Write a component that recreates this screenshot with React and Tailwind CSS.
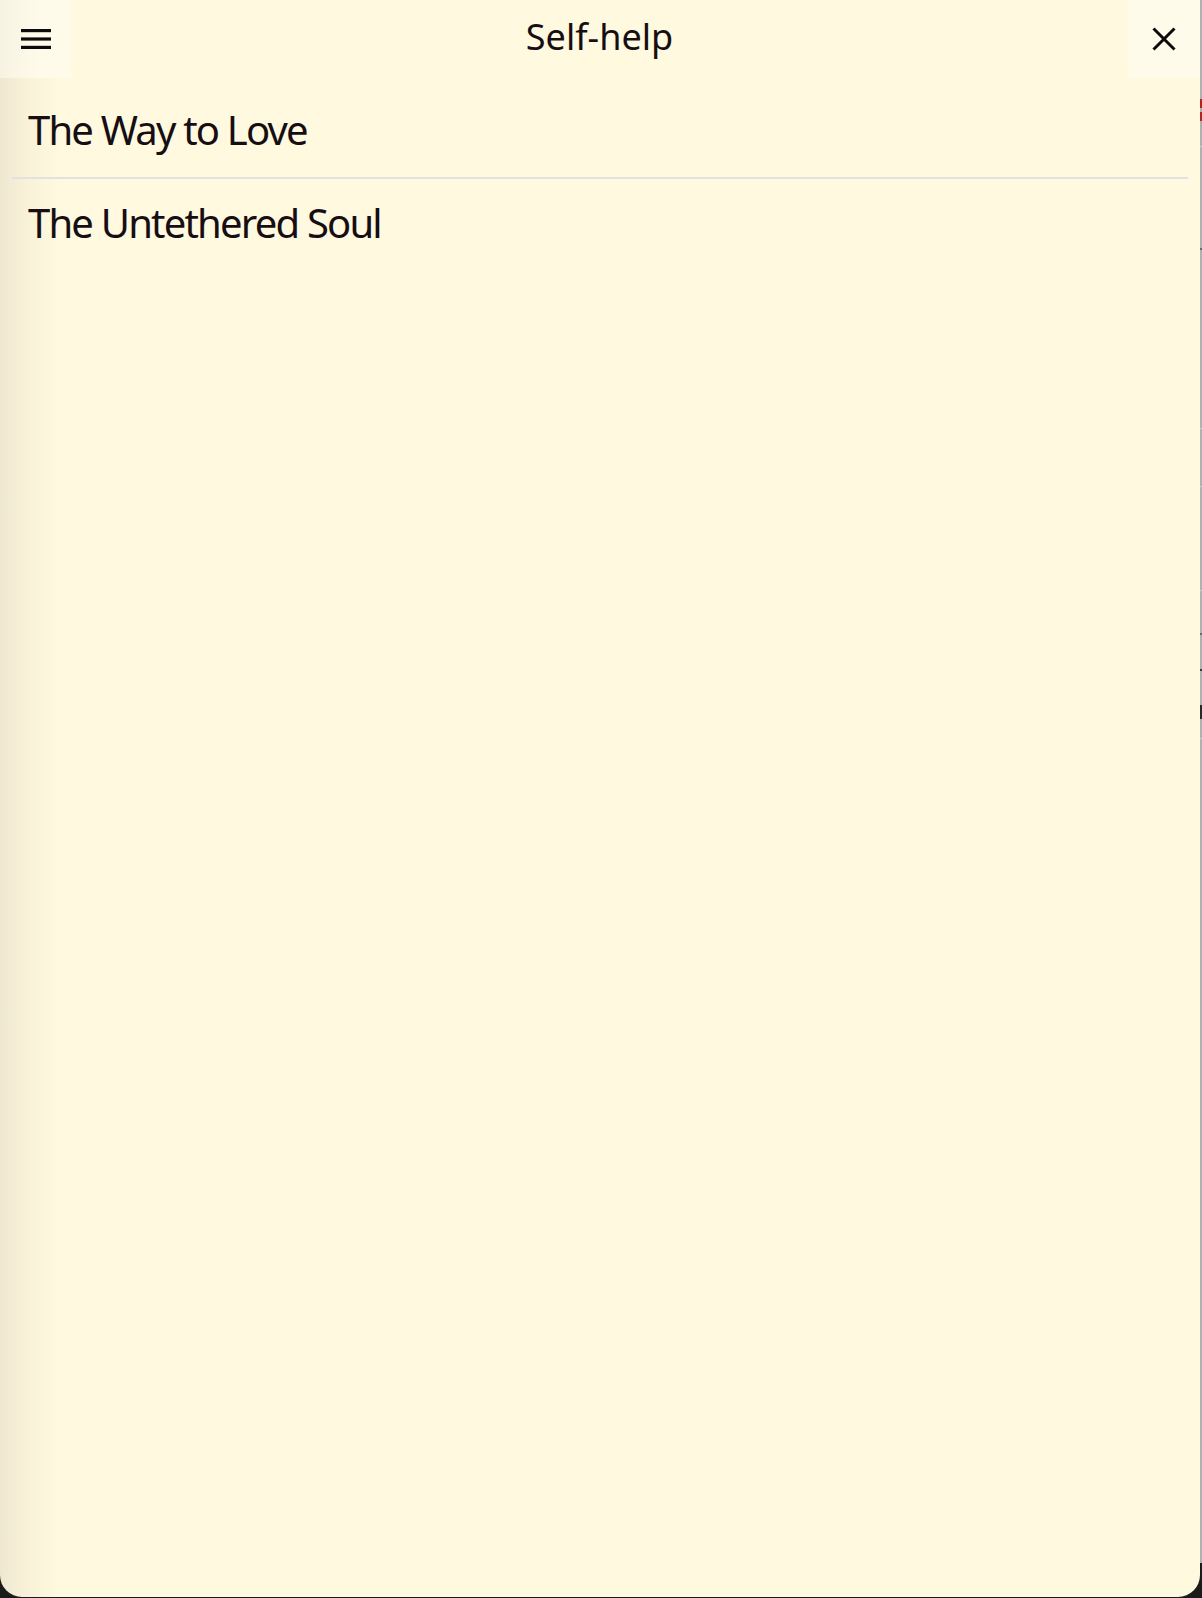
import React from "react";

const marks = [
  { top: 99, h: 9, c: "#b3261e" },
  { top: 112, h: 9, c: "#b3261e" },
  { top: 146, h: 1, c: "#d0d0d0" },
  { top: 248, h: 2, c: "#6a6a6a" },
  { top: 428, h: 1, c: "#d0d0d0" },
  { top: 486, h: 1, c: "#d0d0d0" },
  { top: 590, h: 1, c: "#d0d0d0" },
  { top: 633, h: 2, c: "#6a6a6a" },
  { top: 669, h: 2, c: "#3a3a3a" },
  { top: 705, h: 14, c: "#2a2a2a" },
  { top: 738, h: 1, c: "#d0d0d0" },
];

export default function App() {
  return (
    <div
      className="flex w-[1202px] h-[1598px] bg-[#1b1b1b]"
      style={{ fontFamily: '"Noto Sans", "Open Sans", sans-serif' }}
    >
      <div className="flex flex-col w-[1200px] h-[1597px] overflow-hidden rounded-b-[22px] bg-[linear-gradient(to_right,#efe7d0_0px,#f8f1d8_24px,#fef9df_60px)] text-[#160e12]">
        <header className="flex h-[78px] items-stretch">
          <button className="w-[71px] flex items-center justify-center bg-[linear-gradient(to_right,#f7f3e3,#fffbea_40px)]">
            <svg width="30" height="20" viewBox="0 0 30 20">
              <rect x="0" y="0" width="30" height="3.2" fill="#0d0a0c" />
              <rect x="0" y="8.4" width="30" height="3.2" fill="#0d0a0c" />
              <rect x="0" y="16.8" width="30" height="3.2" fill="#0d0a0c" />
            </svg>
          </button>
          <h1 className="flex-1 text-center text-[36px] leading-[49px] pt-[12px] font-normal">
            Self-help
          </h1>
          <button className="w-[72px] flex items-center justify-center bg-[#fffbea]">
            <svg width="24" height="24" viewBox="0 0 24 24">
              <path d="M1.5 1.5 L22.5 22.5 M22.5 1.5 L1.5 22.5" stroke="#0d0a0c" strokeWidth="3" />
            </svg>
          </button>
        </header>
        <ul className="mx-[12px] mt-[11px]">
          <li className="border-b-2 border-[#e1e1e4] px-[16px] pt-[14px] pb-[20px] text-[40px] leading-[54px] tracking-[-1.8px]">
            The Way to Love
          </li>
          <li className="px-[16px] pt-[17px] pb-[20px] text-[40px] leading-[54px] tracking-[-1.8px]">
            The Untethered Soul
          </li>
        </ul>
      </div>
      <div className="relative w-[2px] h-[1563px] bg-[#b0b0b0]">
        {marks.map((m, i) => (
          <div
            key={i}
            className="absolute left-0 w-[2px]"
            style={{ top: m.top, height: m.h, background: m.c }}
          />
        ))}
      </div>
    </div>
  );
}
